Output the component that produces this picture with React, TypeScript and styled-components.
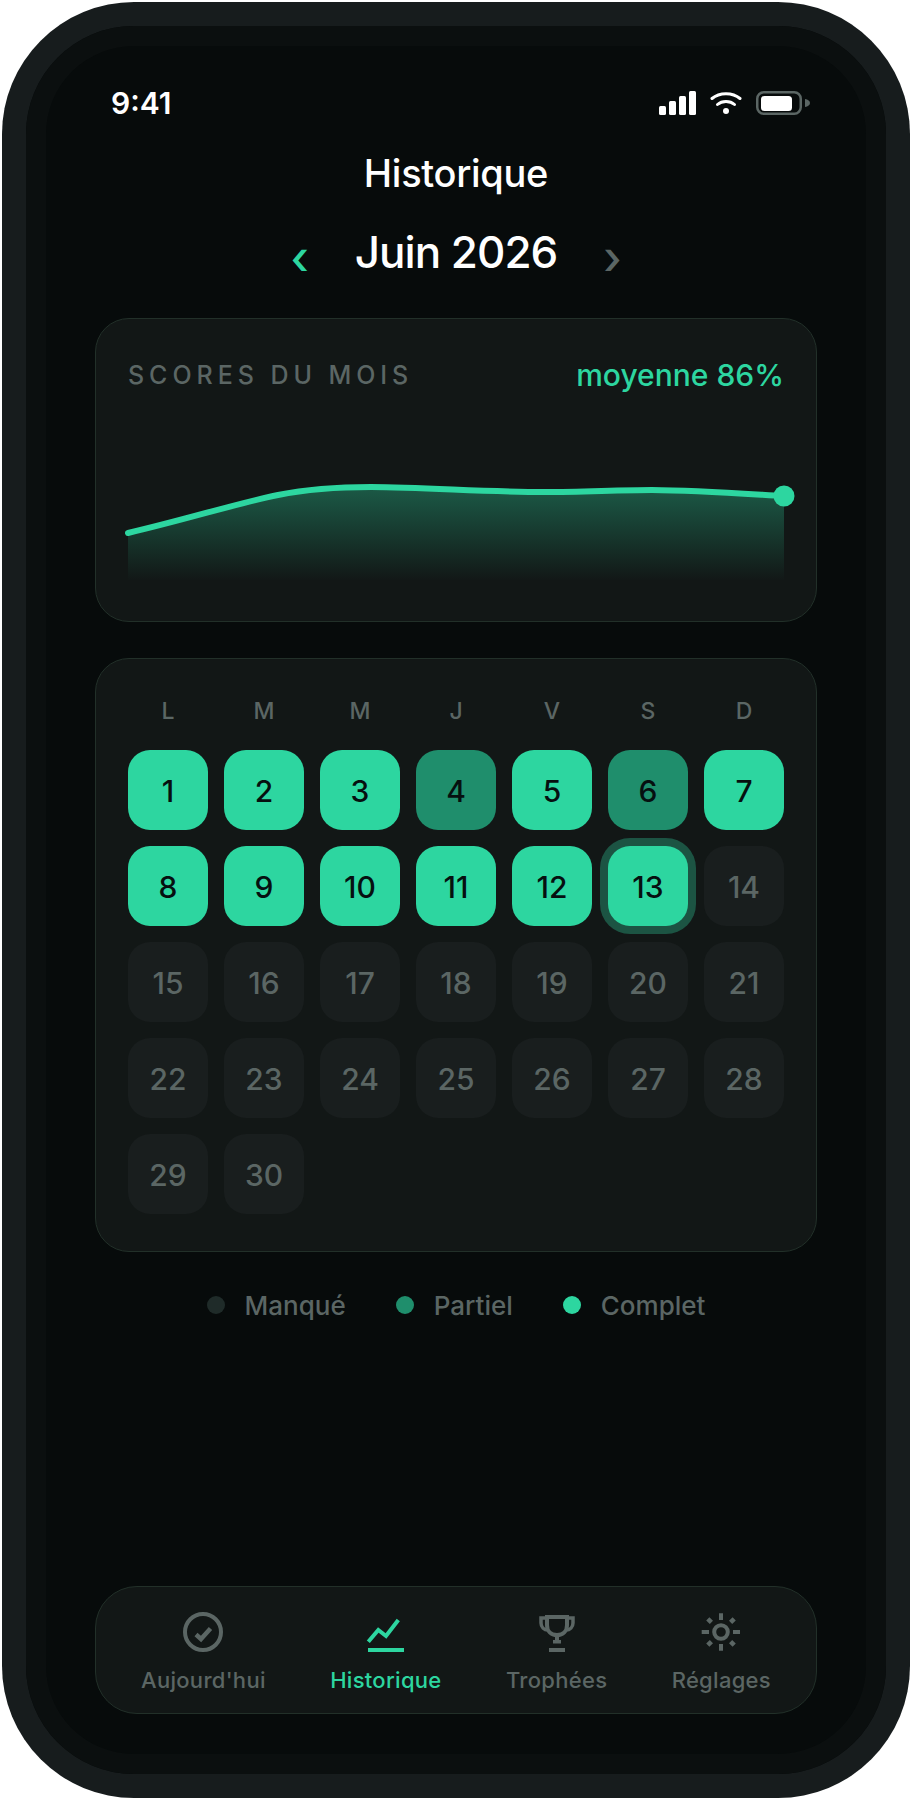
import React from 'react';
import styled, { createGlobalStyle } from 'styled-components';

const accent = '#2dd6a0';
const muted = '#5b6664';

const GlobalStyle = createGlobalStyle`
  html, body {
    margin: 0;
    padding: 0;
    background: #fff;
  }
  * {
    box-sizing: border-box;
  }
`;

type DayState = 'full' | 'partial' | 'today' | 'missed';

const dayOf = (n: number): DayState => {
  if (n === 13) return 'today';
  if (n === 4 || n === 6) return 'partial';
  return n < 13 ? 'full' : 'missed';
};

const days = Array.from({ length: 30 }, (_, i) => i + 1);
const weekdays = ['L', 'M', 'M', 'J', 'V', 'S', 'D'];

const linePath =
  'M0 82C60 68 110 52 150 44C175 39 205 36 243 36C300 36.500 360 41 417 41C455 41 490 39 524 39C570 39.500 620 43 656 45';

const App: React.FC = () => {
  return (
    <>
      <GlobalStyle />
      <Stage>
        <Phone>
          <Screen>
            <StatusBar>
              <Clock>9:41</Clock>
              <StatusIcons>
                <svg width="37" height="24" viewBox="0 0 37 24">
                  <rect x="0" y="15" width="7" height="9" rx="1.500" fill="#fff" />
                  <rect x="10" y="10" width="7" height="14" rx="1.500" fill="#fff" />
                  <rect x="20" y="5" width="7" height="19" rx="1.500" fill="#fff" />
                  <rect x="30" y="0" width="7" height="24" rx="1.500" fill="#fff" />
                </svg>
                <svg width="32" height="24" viewBox="0 0 32 24" fill="none">
                  <path d="M2 7.500C9.500 1 22.500 1 30 7.500" stroke="#fff" strokeWidth="3" strokeLinecap="round" />
                  <path d="M7.500 13.500C12 9.500 20 9.500 24.500 13.500" stroke="#fff" strokeWidth="3" strokeLinecap="round" />
                  <circle cx="16" cy="20" r="3" fill="#fff" />
                </svg>
                <svg width="54" height="24" viewBox="0 0 54 24" fill="none">
                  <rect x="1.250" y="1.250" width="43.500" height="21.500" rx="6.500" stroke={muted} strokeWidth="2.500" />
                  <rect x="5" y="5" width="31" height="15" rx="3.500" fill="#fff" />
                  <path d="M49 8C52 8.500 54 10 54 12C54 14 52 15.500 49 16Z" fill={muted} />
                </svg>
              </StatusIcons>
            </StatusBar>
            <Title>Historique</Title>
            <MonthRow>
              <Arrow $active>‹</Arrow>
              <Month>Juin 2026</Month>
              <Arrow>›</Arrow>
            </MonthRow>
            <ScoreCard>
              <ScoreHeader>
                <ScoreLabel>SCORES DU MOIS</ScoreLabel>
                <Average>moyenne 86%</Average>
              </ScoreHeader>
              <ChartSvg viewBox="0 0 656 130" width="656" height="130">
                <defs>
                  <linearGradient id="chartFill" x1="0" y1="0" x2="0" y2="1">
                    <stop offset="0" stopColor={accent} stopOpacity="0.35" />
                    <stop offset="1" stopColor={accent} stopOpacity="0" />
                  </linearGradient>
                </defs>
                <path d={`${linePath}L656 130L0 130Z`} fill="url(#chartFill)" />
                <path d={linePath} fill="none" stroke={accent} strokeWidth="6" strokeLinecap="round" />
                <circle cx="656" cy="45" r="10.500" fill={accent} />
              </ChartSvg>
            </ScoreCard>
            <CalendarCard>
              <Weekdays>
                {weekdays.map((d, i) => (
                  <Weekday key={i}>{d}</Weekday>
                ))}
              </Weekdays>
              <DayGrid>
                {days.map((n) => (
                  <Day key={n} $state={dayOf(n)}>
                    {n}
                  </Day>
                ))}
              </DayGrid>
            </CalendarCard>
            <Legend>
              <LegendItem>
                <LegendDot $color="#1f2b29" />
                Manqué
              </LegendItem>
              <LegendItem>
                <LegendDot $color="#1f8e6c" />
                Partiel
              </LegendItem>
              <LegendItem>
                <LegendDot $color={accent} />
                Complet
              </LegendItem>
            </Legend>
            <TabBar>
              <Tab>
                <svg width="40" height="40" viewBox="0 0 40 40" fill="none" stroke={muted}>
                  <circle cx="20" cy="20" r="18" strokeWidth="4" />
                  <path d="M13 22.500L18 27L27.500 16.500" strokeWidth="4.500" />
                </svg>
                <TabLabel>Aujourd'hui</TabLabel>
              </Tab>
              <Tab $active>
                <svg width="40" height="40" viewBox="0 0 40 40" fill="none" stroke={accent}>
                  <path d="M2.300 29.700L12.300 18L20 24L32.300 8" strokeWidth="4" />
                  <rect x="2" y="36" width="36" height="4" fill={accent} stroke="none" />
                </svg>
                <TabLabel>Historique</TabLabel>
              </Tab>
              <Tab>
                <svg width="40" height="40" viewBox="0 0 40 40" fill="none" stroke={muted}>
                  <path d="M10 5H30V13C30 19 26 23 20 23C14 23 10 19 10 13Z" strokeWidth="4" />
                  <path d="M10 6H4V11C4 15 7 18 11 18M30 6H36V11C36 15 33 18 29 18" strokeWidth="3.500" />
                  <rect x="18" y="24" width="4" height="6" fill={muted} stroke="none" />
                  <rect x="16" y="28" width="8" height="3.500" fill={muted} stroke="none" />
                  <rect x="12" y="36" width="16" height="4" fill={muted} stroke="none" />
                </svg>
                <TabLabel>Trophées</TabLabel>
              </Tab>
              <Tab>
                <svg width="40" height="40" viewBox="0 0 40 40" fill="none" stroke={muted}>
                  <circle cx="20" cy="20" r="6.800" strokeWidth="4" />
                  <path d="M20 1.300V8M20 32V38.700M0.700 20H8M32 20H39" strokeWidth="4" />
                  <path d="M6.800 6.800L10.400 10.400M29.600 29.600L33.200 33.200M6.800 33.200L10.400 29.600M29.600 10.400L33.200 6.800" strokeWidth="4.500" />
                </svg>
                <TabLabel>Réglages</TabLabel>
              </Tab>
            </TabBar>
          </Screen>
        </Phone>
      </Stage>
    </>
  );
};

const Stage = styled.div`
  width: 912px;
  height: 1800px;
  padding: 2px;
  background: #fff;
  font-family: Inter, "Liberation Sans", sans-serif;
`;

const Phone = styled.div`
  width: 908px;
  height: 1796px;
  padding: 24px;
  border-radius: 132px;
  background: #171c1d;
`;

const Screen = styled.div`
  height: 1748px;
  padding: 65px 69px 0;
  border-radius: 108px;
  background: #070b0b;
  box-shadow: inset 0 0 0 20px #0b0f0f;
  display: flex;
  flex-direction: column;
`;

const StatusBar = styled.div`
  height: 24px;
  padding: 0 0 0 16px;
  display: flex;
  align-items: center;
  justify-content: space-between;
`;

const Clock = styled.span`
  color: #fff;
  font-size: 30px;
  font-weight: 600;
`;

const StatusIcons = styled.div`
  display: flex;
  align-items: center;
  gap: 14px;
  margin-right: 7px;
`;

const Title = styled.h1`
  margin: 36px 0 0;
  color: #fff;
  font-size: 38px;
  line-height: 44px;
  font-weight: 500;
  letter-spacing: -0.3px;
  text-align: center;
`;

const MonthRow = styled.div`
  margin-top: 29px;
  height: 56px;
  display: flex;
  align-items: center;
  justify-content: center;
  gap: 46px;
`;

const Month = styled.span`
  color: #fff;
  font-size: 44px;
  font-weight: 500;
  letter-spacing: -1px;
`;

const Arrow = styled.span<{ $active?: boolean }>`
  margin-top: 10px;
  color: ${(p) => (p.$active ? accent : muted)};
  font-size: 46px;
  font-weight: 500;
`;

const Card = styled.section`
  width: 722px;
  background: #121716;
  border: 1.500px solid #223029;
  border-radius: 34px;
`;

const ScoreCard = styled(Card)`
  height: 304px;
  margin-top: 38px;
  padding: 36px 32px 0;
`;

const ScoreHeader = styled.div`
  height: 40px;
  display: flex;
  align-items: center;
  justify-content: space-between;
`;

const ScoreLabel = styled.span`
  color: ${muted};
  font-size: 25px;
  font-weight: 500;
  letter-spacing: 4.950px;
`;

const Average = styled.span`
  color: ${accent};
  font-size: 30px;
  font-weight: 500;
`;

const ChartSvg = styled.svg`
  display: block;
  margin-top: 56px;
  overflow: visible;
`;

const CalendarCard = styled(Card)`
  height: 594px;
  margin-top: 36px;
  padding: 32px 32px 0;
`;

const Weekdays = styled.div`
  display: grid;
  grid-template-columns: repeat(7, 80px);
  gap: 16px;
  height: 41px;
  margin-bottom: 18px;
`;

const Weekday = styled.span`
  color: ${muted};
  font-size: 23px;
  line-height: 41px;
  font-weight: 500;
  text-align: center;
`;

const DayGrid = styled.div`
  display: grid;
  grid-template-columns: repeat(7, 80px);
  grid-auto-rows: 80px;
  gap: 16px;
`;

const dayBackground: Record<DayState, string> = {
  full: accent,
  today: accent,
  partial: '#1f8e6c',
  missed: '#191e1e',
};

const Day = styled.div<{ $state: DayState }>`
  display: flex;
  align-items: center;
  justify-content: center;
  padding-top: 2px;
  border-radius: 22px;
  font-size: 30px;
  font-weight: 500;
  color: ${(p) => (p.$state === 'missed' ? muted : '#061010')};
  background: ${(p) => dayBackground[p.$state]};
  box-shadow: ${(p) => (p.$state === 'today' ? '0 0 0 8px #1c5443' : 'none')};
`;

const Legend = styled.div`
  margin-top: 35px;
  height: 36px;
  display: flex;
  align-items: center;
  justify-content: center;
  gap: 50px;
`;

const LegendItem = styled.div`
  display: flex;
  align-items: center;
  gap: 20px;
  color: ${muted};
  font-size: 26px;
  font-weight: 500;
`;

const LegendDot = styled.span<{ $color: string }>`
  width: 18px;
  height: 18px;
  border-radius: 50%;
  background: ${(p) => p.$color};
`;

const TabBar = styled(Card)`
  height: 128px;
  margin-top: auto;
  margin-bottom: 60px;
  padding: 25px 45px 0;
  border-radius: 42px;
  display: flex;
  justify-content: space-between;
`;

const Tab = styled.div<{ $active?: boolean }>`
  display: flex;
  flex-direction: column;
  align-items: center;
  gap: 14px;
  color: ${(p) => (p.$active ? accent : muted)};
`;

const TabLabel = styled.span`
  font-size: 22px;
  line-height: 28px;
  font-weight: 500;
  letter-spacing: 0.3px;
`;

export default App;
